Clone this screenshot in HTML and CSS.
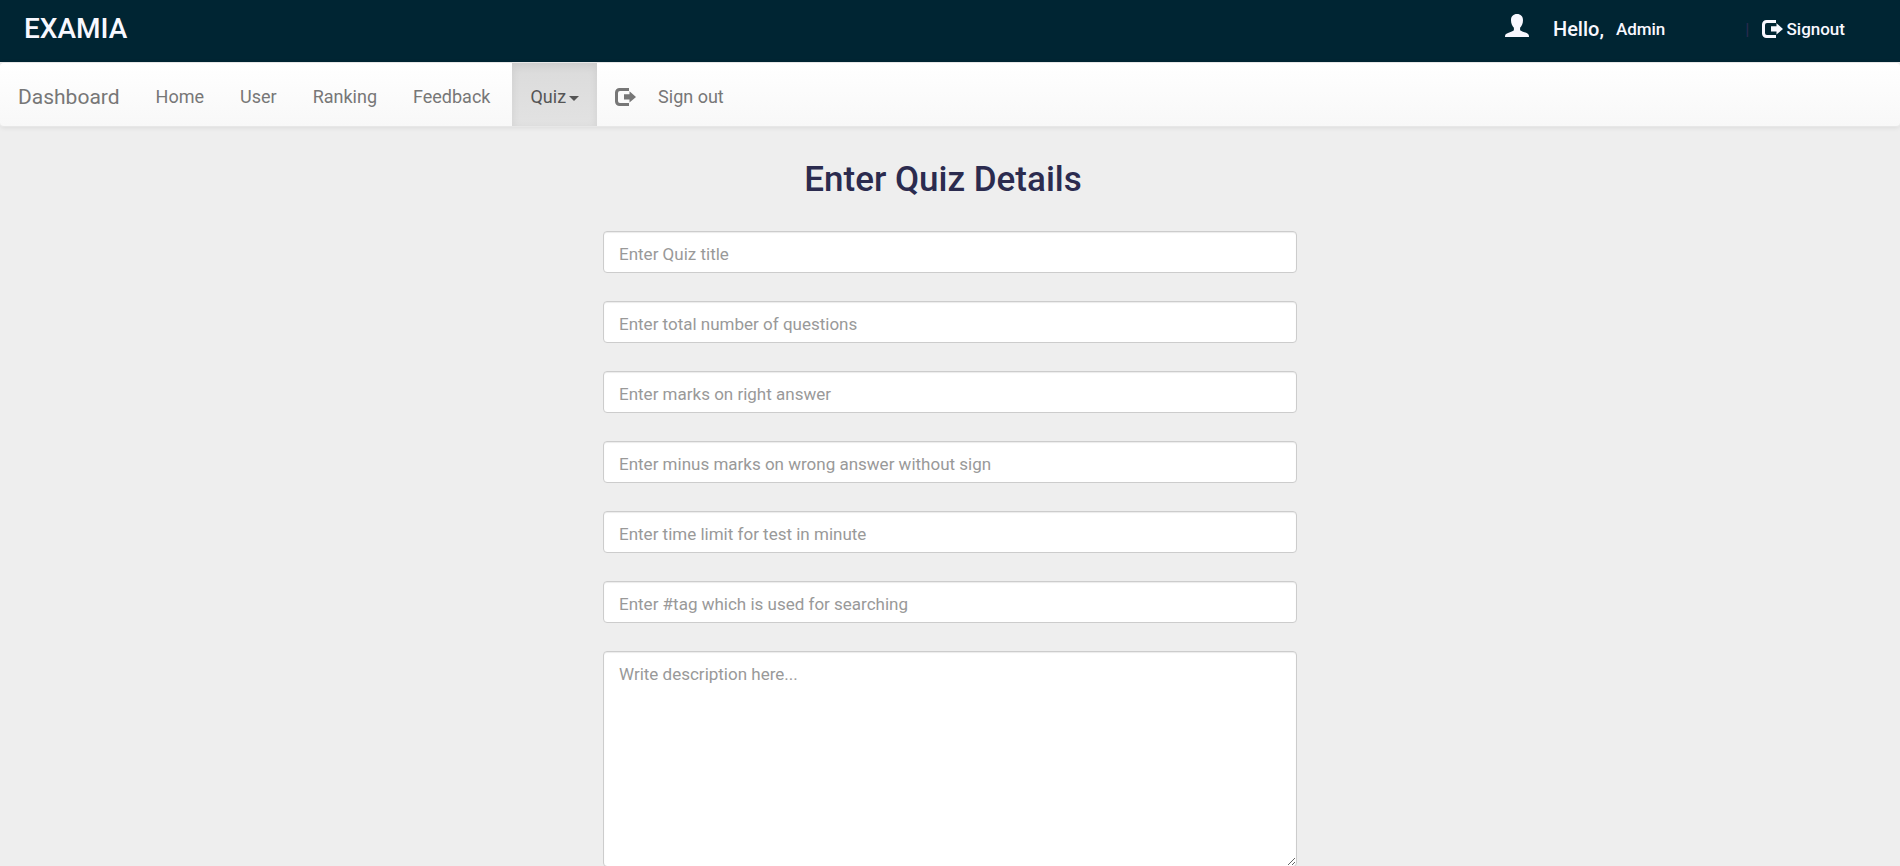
FILE: index.html
```html
<!DOCTYPE html>
<html lang="en">
<head>
<meta charset="utf-8">
<meta name="viewport" content="width=device-width, initial-scale=1">
<title>Examia</title>
<link rel="stylesheet" href="styles.css">
</head>
<body>
<svg class="sprite" aria-hidden="true">
  <symbol id="icon-user" viewBox="0 0 24 23">
    <path d="M12 0C15.7 0 18 2.3 18 6.2C18 9.5 16.8 11.9 15.1 13.8V16.2C17.5 18.1 22.2 18.6 23.5 20.6C24 21.4 24 22.1 24 23H0C0 22.1 0 21.4 .5 20.6C1.8 18.6 6.5 18.1 8.9 16.2V13.8C7.2 11.9 6 9.5 6 6.2C6 2.3 8.3 0 12 0Z"/>
  </symbol>
  <symbol id="icon-out" viewBox="0 0 21 18">
    <path d="M14 0H4.5A4.5 4.5 0 0 0 0 4.500V13.500A4.500 4.500 0 0 0 4.500 18H14V15H5A2 2 0 0 1 3 13V5A2 2 0 0 1 5 3H14Z"/>
    <path d="M14.500 3.300L21 8.900L14.500 14.500V11.500H9V6.300H14.500Z"/>
  </symbol>
</svg>
<header class="header">
  <span class="logo">EXAMIA</span>
  <div class="account">
    <svg class="icon-user" aria-hidden="true"><use href="#icon-user"/></svg>
    <span class="hello">Hello,</span>
    <a class="account-link" href="#">Admin</a>
    <span class="divider">|</span>
    <a class="account-link signout" href="#"><svg class="icon-out" aria-hidden="true"><use href="#icon-out"/></svg>Signout</a>
  </div>
</header>
<nav class="navbar">
  <a class="brand" href="#">Dashboard</a>
  <a class="nav-link" href="#">Home</a>
  <a class="nav-link" href="#">User</a>
  <a class="nav-link" href="#">Ranking</a>
  <a class="nav-link" href="#">Feedback</a>
  <button class="nav-link active" type="button" aria-haspopup="true">Quiz<span class="caret"></span></button>
  <a class="nav-link nav-signout" href="#"><svg class="icon-out" aria-hidden="true"><use href="#icon-out"/></svg>Sign out</a>
</nav>
<main class="content">
  <h1 class="title">Enter Quiz Details</h1>
  <form class="quiz-form">
    <input class="field" type="text" aria-label="Quiz title" placeholder="Enter Quiz title">
    <input class="field" type="text" aria-label="Total number of questions" placeholder="Enter total number of questions">
    <input class="field" type="text" aria-label="Marks on right answer" placeholder="Enter marks on right answer">
    <input class="field" type="text" aria-label="Minus marks on wrong answer" placeholder="Enter minus marks on wrong answer without sign">
    <input class="field" type="text" aria-label="Time limit" placeholder="Enter time limit for test in minute">
    <input class="field" type="text" aria-label="Tag" placeholder="Enter #tag which is used for searching">
    <textarea class="field" rows="10" aria-label="Description" placeholder="Write description here..."></textarea>
  </form>
</main>
</body>
</html>
```
FILE: styles.css
```css
* {
  box-sizing: border-box;
}

body {
  margin: 0;
  background: #eee;
  font-family: Roboto, "Liberation Sans", sans-serif;
  font-size: 17px;
  color: #2b2b4f;
}

a {
  color: inherit;
  text-decoration: none;
}

.sprite {
  display: none;
}

.header {
  display: flex;
  justify-content: space-between;
  height: 62px;
  padding: 0 55px 4px 24px;
  background: #002533;
  color: #f8f8ff;
}

.logo {
  align-self: center;
  font-size: 28px;
  font-weight: 500;
  line-height: 32px;
}

.account {
  display: flex;
  align-items: center;
}

.icon-user {
  width: 24px;
  height: 23px;
  margin-right: 24px;
  margin-bottom: 8px;
  fill: currentColor;
}

.icon-out {
  width: 21px;
  height: 18px;
  flex: none;
  fill: currentColor;
}

.hello {
  margin-right: 12px;
  font-size: 20px;
  font-weight: 500;
}

.account-link {
  font-size: 17px;
  font-weight: 500;
}

.divider {
  margin-left: 80px;
  margin-right: 12px;
  color: #2b2b4f;
}

.signout {
  display: flex;
  align-items: center;
  gap: 4px;
}

.navbar {
  display: flex;
  height: 65px;
  border: solid #e7e7e7;
  border-width: 1px 0;
  border-radius: 4px;
  background: linear-gradient(#fff, #f8f8f8);
  box-shadow: 0 1px 5px rgba(0, 0, 0, 0.08);
  color: #777;
}

.brand,
.nav-link {
  display: flex;
  align-items: center;
  padding: 4px 18px 0;
  font-size: 18px;
}

.brand {
  font-size: 21px;
}

.nav-link {
  border: 0;
  background: none;
  color: inherit;
  font-family: inherit;
}

.nav-link.active {
  gap: 3px;
  margin-left: 4px;
  background: linear-gradient(#dbdbdb, #e2e2e2);
  box-shadow: inset 0 3px 9px rgba(0, 0, 0, 0.08);
  color: #555;
}

.caret {
  margin-top: 4px;
  border: solid transparent;
  border-width: 5px 5px 0;
  border-top-color: currentColor;
}

.nav-signout {
  gap: 22px;
}

.content {
  padding: 30px 15px 0;
}

.title {
  margin: 0 14px 28px 0;
  font-size: 35px;
  font-weight: 500;
  line-height: 46px;
  text-align: center;
}

.quiz-form {
  display: flex;
  flex-direction: column;
  gap: 28px;
  max-width: 694px;
  margin: 0 auto;
}

.field {
  width: 100%;
  padding: 11px 15px 6px;
  border: 1px solid #ccc;
  border-radius: 4px;
  background: #fff;
  box-shadow: inset 0 1px 1px rgba(0, 0, 0, 0.08);
  color: #555;
  font-family: inherit;
  font-size: 17px;
  line-height: 23px;
}

textarea.field {
  height: 216px;
  resize: both;
}

.field::placeholder {
  color: #999;
  opacity: 1;
}
```
